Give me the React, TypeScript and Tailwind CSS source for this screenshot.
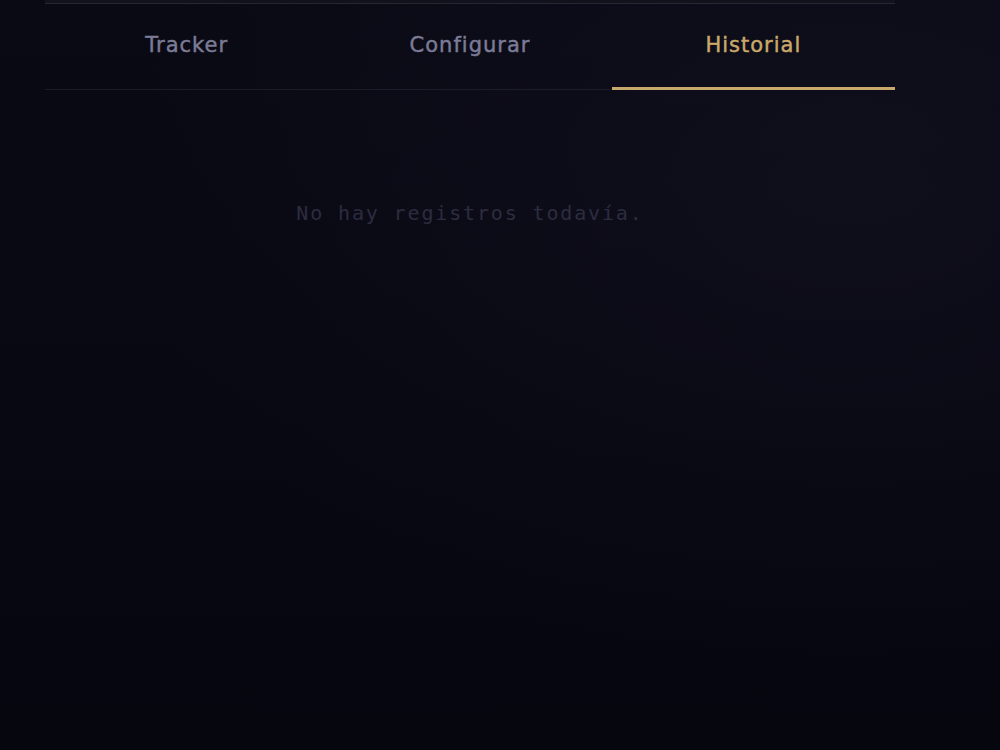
import { useState } from "react";

const TABS = ["Tracker", "Configurar", "Historial"] as const;
type Tab = (typeof TABS)[number];

export default function App() {
  const [active, setActive] = useState<Tab>("Historial");
  const records: string[] = [];

  return (
    <div className="relative min-h-[750px] w-full overflow-hidden bg-[linear-gradient(180deg,#0a0a15_0%,#080812_50%,#05060e_100%)]">
      <div
        aria-hidden
        className="pointer-events-none absolute inset-0 bg-[radial-gradient(ellipse_at_85%_25%,rgba(22,20,36,0.45)_0%,rgba(22,20,36,0)_60%)]"
      />
      <div className="relative ml-[45px] w-[850px]">
        {/* tail of the card above the tabs */}
        <div className="h-[4px] border-b border-[#262634] bg-[#12121d]" />

        <nav className="grid grid-cols-3 border-b border-[#1c1c29]">
          {TABS.map((tab) => {
            const isActive = tab === active;
            return (
              <button
                key={tab}
                type="button"
                onClick={() => setActive(tab)}
                className={`-mb-px flex h-[86px] items-center justify-center border-b-[3px] pb-[0px] font-['DejaVu_Sans',sans-serif] text-[21px] tracking-[1px] [-webkit-text-stroke:0.45px_currentColor] ${
                  isActive
                    ? "border-[#c9a96b] text-[#c9a96b]"
                    : "border-transparent text-[#7b7b96]"
                }`}
              >
                {tab}
              </button>
            );
          })}
        </nav>

        {active === "Historial" && (
          <section className="pt-[108px]">
            {records.length === 0 ? (
              <p className="text-center font-['DejaVu_Sans_Mono',monospace] text-[20px] leading-[30px] tracking-[1.85px] text-[#2c2c40]">
                No hay registros todavía.
              </p>
            ) : (
              <ul>
                {records.map((r) => (
                  <li key={r}>{r}</li>
                ))}
              </ul>
            )}
          </section>
        )}
      </div>
    </div>
  );
}
